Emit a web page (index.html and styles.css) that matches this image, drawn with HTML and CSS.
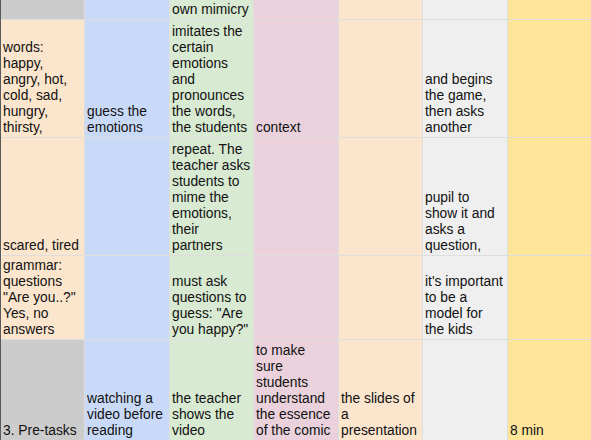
FILE: index.html
```html
<!DOCTYPE html>
<html lang="en">
<head>
  <meta charset="UTF-8">
  <title>Lesson plan</title>
  <link rel="stylesheet" href="styles.css">
</head>
<body>
  <div class="sheet">
    <!-- row 1 -->
    <div class="cell gray"></div>
    <div class="cell blue"></div>
    <div class="cell green">own mimicry</div>
    <div class="cell pink"></div>
    <div class="cell peach"></div>
    <div class="cell light"></div>
    <div class="cell yellow"></div>

    <!-- row 2 -->
    <div class="cell peach">words:<br>happy,<br>angry, hot,<br>cold, sad,<br>hungry,<br>thirsty,</div>
    <div class="cell blue">guess the<br>emotions</div>
    <div class="cell green">imitates the<br>certain<br>emotions<br>and<br>pronounces<br>the words,<br>the students</div>
    <div class="cell pink">context</div>
    <div class="cell peach"></div>
    <div class="cell light">and begins<br>the game,<br>then asks<br>another</div>
    <div class="cell yellow"></div>

    <!-- row 3 -->
    <div class="cell peach">scared, tired</div>
    <div class="cell blue"></div>
    <div class="cell green">repeat. The<br>teacher asks<br>students to<br>mime the<br>emotions,<br>their<br>partners</div>
    <div class="cell pink"></div>
    <div class="cell peach"></div>
    <div class="cell light">pupil to<br>show it and<br>asks a<br>question,</div>
    <div class="cell yellow"></div>

    <!-- row 4 -->
    <div class="cell peach">grammar:<br>questions<br>"Are you..?"<br>Yes, no<br>answers</div>
    <div class="cell blue"></div>
    <div class="cell green">must ask<br>questions to<br>guess: "Are<br>you happy?"</div>
    <div class="cell pink"></div>
    <div class="cell peach"></div>
    <div class="cell light">it's important<br>to be a<br>model for<br>the kids</div>
    <div class="cell yellow"></div>

    <!-- row 5 -->
    <div class="cell gray">3. Pre-tasks</div>
    <div class="cell blue">watching a<br>video before<br>reading</div>
    <div class="cell green">the teacher<br>shows the<br>video</div>
    <div class="cell pink">to make<br>sure<br>students<br>understand<br>the essence<br>of the comic</div>
    <div class="cell peach">the slides of<br>a<br>presentation</div>
    <div class="cell light"></div>
    <div class="cell yellow">8 min</div>
  </div>
</body>
</html>
```

FILE: styles.css
```css
* {
  margin: 0;
  padding: 0;
  box-sizing: border-box;
}

body {
  font-family: 'Liberation Sans', Arial, sans-serif;
  font-size: 13.8px;
  line-height: 16px;
  color: #111;
  background-color: #fff;
  overflow: hidden;
}

/* Spreadsheet grid */
.sheet {
  display: grid;
  grid-template-columns: 83px 84px 83px 84px 83px 84px 83px;
  grid-template-rows: 19px 117px 117px 83px 100px;
  gap: 1px;
  background-color: #dedede;
  border-left: 1px solid #5a5a5a;
  width: 591px;
  padding-bottom: 1px;
}

.cell {
  display: flex;
  flex-direction: column;
  justify-content: flex-end;
  padding: 0 1px 1px 2px;
  white-space: nowrap;
  overflow: hidden;
}

/* Cell colours */
.gray {
  background-color: #cccccc;
}

.blue {
  background-color: #c9daf8;
}

.green {
  background-color: #d9ead3;
}

.pink {
  background-color: #ead1dc;
}

.peach {
  background-color: #fce5cd;
}

.light {
  background-color: #efefef;
}

.yellow {
  background-color: #ffe599;
}
```
